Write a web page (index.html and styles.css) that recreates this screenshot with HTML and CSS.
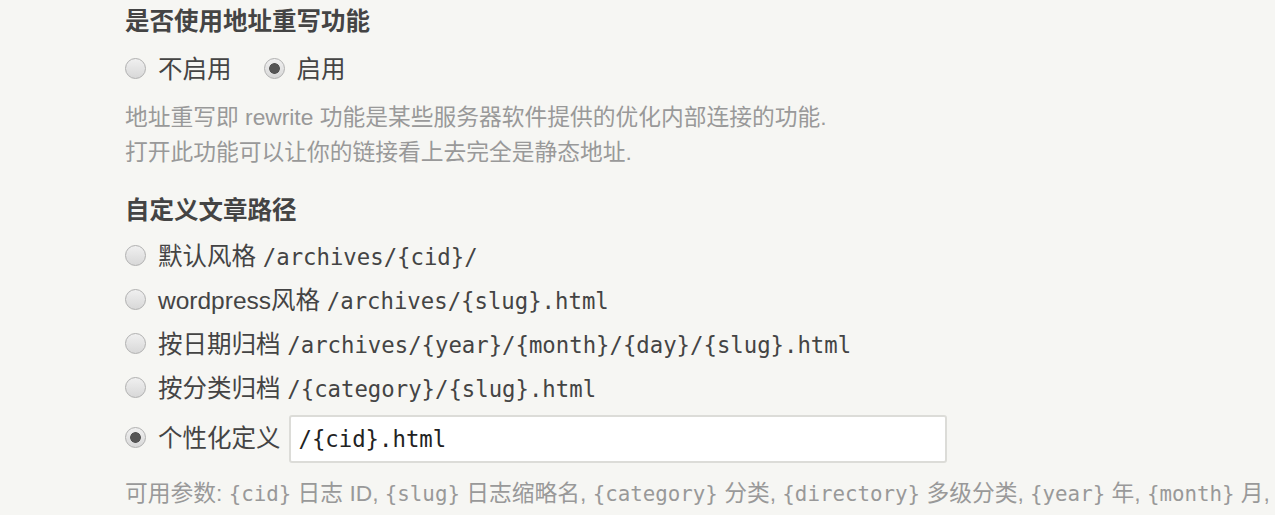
FILE: index.html
```html
<!DOCTYPE html>
<html lang="zh-CN">
<head>
<meta charset="utf-8">
<title>永久链接设置</title>
<link rel="stylesheet" href="styles.css">
</head>
<body>
<div class="page">
  <div class="group">
    <div class="title">是否使用地址重写功能</div>
    <div class="radios">
      <label class="opt"><input type="radio" name="rewrite" class="radio"><span>不启用</span></label>
      <label class="opt"><input type="radio" name="rewrite" class="radio" checked><span>启用</span></label>
    </div>
    <p class="desc">地址重写即 rewrite 功能是某些服务器软件提供的优化内部连接的功能.<br>打开此功能可以让你的链接看上去完全是静态地址.</p>
  </div>
  <div class="group group2">
    <div class="title">自定义文章路径</div>
    <ul class="list">
      <li><label class="opt"><input type="radio" name="path" class="radio"><span>默认风格 <code>/archives/{cid}/</code></span></label></li>
      <li><label class="opt"><input type="radio" name="path" class="radio"><span>wordpress风格 <code>/archives/{slug}.html</code></span></label></li>
      <li><label class="opt"><input type="radio" name="path" class="radio"><span>按日期归档 <code>/archives/{year}/{month}/{day}/{slug}.html</code></span></label></li>
      <li><label class="opt"><input type="radio" name="path" class="radio"><span>按分类归档 <code>/{category}/{slug}.html</code></span></label></li>
      <li class="custom"><label class="opt"><input type="radio" name="path" class="radio" checked><span>个性化定义</span></label><input type="text" class="text" value="/{cid}.html"></li>
    </ul>
    <p class="desc desc2">可用参数: <code>{cid}</code> 日志 ID, <code>{slug}</code> 日志缩略名, <code>{category}</code> 分类, <code>{directory}</code> 多级分类, <code>{year}</code> 年, <code>{month}</code> 月, <code>{day}</code> 日</p>
  </div>
</div>
</body>
</html>
```

FILE: styles.css
```css
html, body {
  margin: 0;
  padding: 0;
  overflow: hidden;
}
body {
  background: #f6f6f3;
  color: #444;
  font-family: "Liberation Sans", "Noto Sans CJK SC", sans-serif;
}
.page {
  padding-left: 125px;
  width: 1150px;
}
.title {
  font-size: 24.5px;
  font-weight: bold;
  line-height: 44px;
  color: #444;
}
.radios {
  display: flex;
  gap: 32px;
  margin-top: 4px;
  height: 44px;
  align-items: center;
}
.opt {
  display: flex;
  align-items: center;
  gap: 12px;
  font-size: 24.5px;
  line-height: 44px;
  color: #444;
  white-space: nowrap;
}
.radio {
  appearance: none;
  -webkit-appearance: none;
  margin: 0;
  width: 21px;
  height: 21px;
  border-radius: 50%;
  border: 1px solid #b0b0b0;
  background: linear-gradient(#f0f0f0, #d8d8d8);
  box-sizing: border-box;
  position: relative;
  top: -2px;
  flex: none;
}
.radio:checked {
  background: radial-gradient(circle, #555 0, #555 5px, transparent 5.7px), linear-gradient(#f0f0f0, #d8d8d8);
}
code {
  font-family: "DejaVu Sans Mono", monospace;
  font-size: 22.3px;
  color: #444;
}
.desc {
  margin: 7.5px 0 0;
  font-size: 22.75px;
  line-height: 35px;
  color: #999;
}
.group2 {
  margin-top: 19.5px;
}
.list {
  list-style: none;
  margin: 2px 0 0;
  padding: 0;
}
.list li {
  height: 44px;
}
.list li.custom {
  display: flex;
  align-items: center;
  gap: 8px;
  height: 48px;
  margin-top: 4px;
}
.text {
  width: 658px;
  height: 48px;
  box-sizing: border-box;
  border: 2px solid #dcdcd8;
  border-radius: 3px;
  background: #fff;
  padding: 0 8px;
  font-family: "DejaVu Sans Mono", monospace;
  font-size: 22.3px;
  color: #222;
  outline: none;
}
.desc2 {
  margin-top: 12.5px;
}
.desc2 code {
  font-size: 20.8px;
  color: #999;
}
```
